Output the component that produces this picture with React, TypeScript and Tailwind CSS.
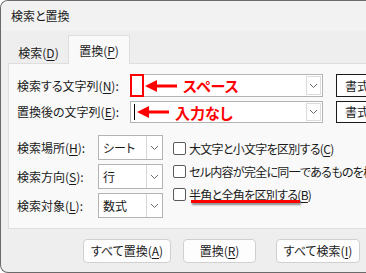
import React from "react";

const F = "font-['Noto_Sans_CJK_JP','Noto_Sans',sans-serif] [font-feature-settings:'palt']";

function U({ c }: { c: string }) {
  return <span className="underline decoration-1 underline-offset-[2px]">{c}</span>;
}

function Chevron() {
  return (
    <svg width="9" height="6" viewBox="0 0 9 6">
      <path d="M1 1 L4.5 4.5 L8 1" fill="none" stroke="#6b6b6b" strokeWidth="1" />
    </svg>
  );
}

function Arrow() {
  return (
    <svg width="32" height="14" viewBox="0 0 32 14">
      <path d="M0 7 L12 1 L12 5.5 L32 5.5 L32 8.5 L12 8.5 L12 13 Z" fill="#ff0000" />
    </svg>
  );
}

function Select({ text }: { text: string }) {
  return (
    <div className="flex h-[25px] w-[65px] border border-[#b4b4b4] bg-white">
      <div className="flex flex-1 items-center pl-[4px] text-[12px] text-[#1a1a1a]">{text}</div>
      <div className="flex w-[16px] items-center justify-center border-l border-[#d6d6d6]">
        <Chevron />
      </div>
    </div>
  );
}

function Check({ children }: { children: React.ReactNode }) {
  return (
    <div className="flex h-[23px] items-center whitespace-nowrap">
      <div className="h-[13px] w-[13px] shrink-0 rounded-[2px] border border-[#5a5a5a] bg-white" />
      <div className="ml-[3px] text-[12px] tracking-[-0.7px] text-[#1a1a1a]">{children}</div>
    </div>
  );
}

function Btn({ children, w }: { children: React.ReactNode; w: string }) {
  return (
    <div
      className={`flex h-[24px] ${w} items-center justify-center rounded-[4px] border border-[#d0d0d0] bg-[#fdfdfd] text-[12px] text-[#1a1a1a]`}
    >
      {children}
    </div>
  );
}

export default function App() {
  return (
    <div
      className={`${F} relative flex h-[273px] w-[366px] flex-col overflow-hidden rounded-tl-[8px] rounded-bl-[8px] border-t border-l border-b border-[#6a6a6a] bg-[#eeeeee] leading-none`}
    >
      {/* title bar */}
      <div className="flex h-[30px] shrink-0 items-center bg-[#f2f2f2] pl-[10px] text-[12px] text-[#1a1a1a]">
        検索と置換
      </div>

      {/* tabs */}
      <div className="flex h-[32px] shrink-0 items-end pl-[8px]">
        <div className="flex h-[23px] w-[59px] items-center justify-center text-[12px] text-[#1a1a1a]">
          <span className="mt-[2px]">検索(<U c="D" />)</span>
        </div>
        <div className="relative -mb-px flex h-[29px] w-[62px] items-center justify-center border border-b-0 border-[#dedede] bg-[#f9f9f9] text-[12px] text-[#1a1a1a]">
          <span className="mt-[1px]">置換(<U c="P" />)</span>
        </div>
      </div>

      {/* panel */}
      <div className="ml-[7px] flex h-[166px] w-[380px] shrink-0 flex-col border border-[#dedede] bg-[#f9f9f9] pl-[8px] pt-[10px]">
        {/* row 1 */}
        <div className="flex h-[23px] items-center">
          <div className="w-[113px] text-[12px] text-[#1a1a1a]">
            検索する文字列(<U c="N" />):
          </div>
          <div className="relative flex h-[23px] w-[193px] border border-[#b4b4b4] bg-white">
            <div className="flex flex-1 items-center">
              <div className="-ml-px h-[23px] w-[14px] -mt-px border-[2px] border-[#ff0000]" />
              <div className="ml-[1px]">
                <Arrow />
              </div>
              <div className="ml-[6px] text-[15px] font-bold text-[#ff0000]">スペース</div>
            </div>
            <div className="my-[1px] mr-[1px] flex w-[15px] items-center justify-center border border-[#dcdcdc]">
              <Chevron />
            </div>
          </div>
          <div className="ml-[13px] flex h-[23px] w-[50px] items-center border border-[#1a1a1a] bg-white pl-[8px] text-[12px] text-[#1a1a1a]">
            書式
          </div>
        </div>

        {/* row 2 */}
        <div className="mt-[4px] flex h-[22px] items-center">
          <div className="w-[113px] text-[12px] text-[#1a1a1a]">
            置換後の文字列(<U c="E" />):
          </div>
          <div className="relative flex h-[22px] w-[193px] border border-[#b4b4b4] bg-white">
            <div className="flex flex-1 items-center">
              <div className="ml-[3px] h-[16px] w-px bg-black" />
              <div className="ml-[2px]">
                <Arrow />
              </div>
              <div className="ml-[6px] text-[15px] font-bold text-[#ff0000]">入力なし</div>
            </div>
            <div className="my-[1px] mr-[1px] flex w-[15px] items-center justify-center border border-[#dcdcdc]">
              <Chevron />
            </div>
          </div>
          <div className="ml-[13px] flex h-[22px] w-[50px] items-center border border-[#1a1a1a] bg-white pl-[8px] text-[12px] text-[#1a1a1a]">
            書式
          </div>
        </div>

        {/* lower section */}
        <div className="mt-[12px] flex">
          <div className="flex flex-col gap-[4px]">
            <div className="flex h-[25px] items-center">
              <div className="w-[81px] text-[12px] text-[#1a1a1a]">
                検索場所(<U c="H" />):
              </div>
              <Select text="シート" />
            </div>
            <div className="flex h-[25px] items-center">
              <div className="w-[81px] text-[12px] text-[#1a1a1a]">
                検索方向(<U c="S" />):
              </div>
              <Select text="行" />
            </div>
            <div className="flex h-[25px] items-center">
              <div className="w-[81px] text-[12px] text-[#1a1a1a]">
                検索対象(<U c="L" />):
              </div>
              <Select text="数式" />
            </div>
          </div>
          <div className="ml-[10px] mt-[2px] flex flex-col">
            <Check>
              大文字と小文字を区別する(<U c="C" />)
            </Check>
            <Check>セル内容が完全に同一であるものを検索する(<U c="O" />)</Check>
            <Check>
              <span className="relative">
                半角と全角を区別する
                <span className="absolute left-[2px] right-[-3px] top-[14px] h-[3px] bg-[#ff0000] shadow-[1px_2px_2px_rgba(0,0,0,0.45)]" />
              </span>
              (<U c="B" />)
            </Check>
          </div>
        </div>
      </div>

      {/* buttons */}
      <div className="flex flex-1 items-center pl-[82px]">
        <Btn w="w-[88px]">
          すべて置換(<U c="A" />)
        </Btn>
        <div className="ml-[12px]">
          <Btn w="w-[73px]">
            置換(<U c="R" />)
          </Btn>
        </div>
        <div className="ml-[20px]">
          <Btn w="w-[84px]">
            すべて検索(<U c="I" />)
          </Btn>
        </div>
      </div>
    </div>
  );
}
